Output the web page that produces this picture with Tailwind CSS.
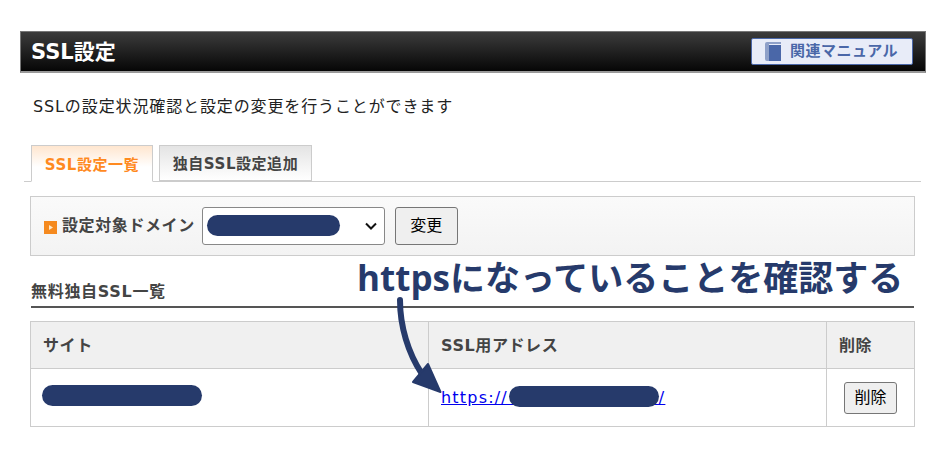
<!DOCTYPE html>
<html lang="ja">
<head>
  <meta charset="UTF-8">
  <title>SSL設定</title>
  <script src="https://cdn.jsdelivr.net/npm/@tailwindcss/browser@4"></script>
</head>
<body class="bg-white w-[950px] h-[450px] overflow-hidden relative font-['DejaVu_Sans','Noto_Sans_CJK_JP',sans-serif] text-[#222]">
  <div class="pt-[31px] pl-[20px] w-[926px]">
    <!-- Title bar -->
    <div class="h-[42px] flex items-center justify-between border border-[#777] border-b-2 border-b-[#999] bg-linear-to-b/srgb from-[#3c3c3c] to-[#060606] pl-[10px] pr-[12px]">
      <h1 class="text-[21px] font-bold text-white mt-[2px]">SSL設定</h1>
      <a class="w-[162px] h-[27px] flex items-center gap-[9px] pl-[13px] rounded-[2px] bg-[#e8ecf8] border border-[#4a67a8] text-[#4a67a8] text-[15px] tracking-[0.5px] font-bold">
        <svg width="16" height="19" viewBox="0 0 16 19"><path d="M2 0h14v2H4v17H2a2 2 0 0 1-2-2V2a2 2 0 0 1 2-2z" fill="#8ea0c8"/><path d="M4 3h12v16H4z" fill="#4a67a8"/></svg>
        関連マニュアル
      </a>
    </div>

    <p class="mt-[23px] ml-[13px] text-[16px] leading-[22px] tracking-[0.88px]">SSLの設定状況確認と設定の変更を行うことができます</p>

    <!-- Tabs -->
    <div class="mt-[27px] ml-[4px] w-[897px] h-[37px] flex gap-[6px] pl-[7px] border-b border-[#ccc] text-[15px] tracking-[0.55px] font-bold">
      <div class="w-[122px] h-[37px] pt-[3px] flex items-center justify-center border border-[#ccc] border-b-white bg-linear-to-b/srgb from-[#ffe6cf] to-white to-60% text-[#ff8a1f]">SSL設定一覧</div>
      <div class="w-[153px] h-[36px] pt-[3px] flex items-center justify-center border border-[#ccc] bg-linear-to-b/srgb from-[#e4e4e4] to-white text-[#444]">独自SSL設定追加</div>
    </div>

    <!-- Domain selector -->
    <div class="mt-[14px] ml-[10px] w-[885px] h-[60px] flex items-center pl-[13px] border border-[#ccc] bg-linear-to-b/srgb from-[#fafafa] to-[#f3f3f3]">
      <svg width="13" height="13" viewBox="0 0 13 13" class="mt-[2px]"><rect width="13" height="13" fill="#f58a1f"/><path d="M5 4l4 2.5L5 9z" fill="#ffe9c8"/></svg>
      <span class="ml-[5px] text-[16px] tracking-[0.6px] font-bold text-[#444] whitespace-nowrap">設定対象ドメイン</span>
      <div class="ml-[7px] w-[183px] h-[38px] flex items-center justify-end pr-[7px] bg-white border border-[#888] rounded-[3px]">
        <svg width="12" height="8" viewBox="0 0 12 8"><path d="M1 1.5l5 5 5-5" fill="none" stroke="#111" stroke-width="2"/></svg>
      </div>
      <button class="ml-[10px] w-[63px] h-[38px] bg-[#efefef] border border-[#767676] rounded-[3px] text-[16px] text-black">変更</button>
    </div>

    <!-- Table heading -->
    <h2 class="mt-[25px] ml-[11px] w-[883px] h-[27px] border-b-2 border-[#555] text-[16px] tracking-[0.7px] font-bold text-[#444] leading-[22px]">無料独自SSL一覧</h2>

    <!-- Table -->
    <table class="mt-[13px] ml-[10px] w-[885px] h-[106px] border-collapse table-fixed text-left text-[16px]">
      <thead>
        <tr class="h-[47px] bg-[#f0f0f0] text-[#444] tracking-[0.6px]">
          <th class="w-[398px] border border-[#ccc] pl-[12px] pt-[2px] font-bold">サイト</th>
          <th class="w-[398px] border border-[#ccc] pl-[12px] pt-[2px] font-bold">SSL用アドレス</th>
          <th class="border border-[#ccc] pl-[12px] pt-[2px] font-bold">削除</th>
        </tr>
      </thead>
      <tbody>
        <tr class="h-[58px]">
          <td class="border border-[#ccc]"></td>
          <td class="border border-[#ccc] pl-[12px]"><a class="text-[#0000ee] underline tracking-[1.2px] whitespace-nowrap">https://&nbsp;&nbsp;&nbsp;&nbsp;&nbsp;&nbsp;&nbsp;&nbsp;&nbsp;&nbsp;&nbsp;&nbsp;&nbsp;&nbsp;&nbsp;&nbsp;&nbsp;&nbsp;&nbsp;&nbsp;&nbsp;&nbsp;&nbsp;&nbsp;/</a></td>
          <td class="border border-[#ccc]"><button class="ml-[17px] w-[53px] h-[32px] bg-[#efefef] border border-[#767676] rounded-[3px] text-[16px] text-black">削除</button></td>
        </tr>
      </tbody>
    </table>
  </div>

  <!-- Redactions and annotation, drawn over the page -->
  <div class="absolute left-[207px] top-[215px] w-[133px] h-[21px] rounded-full bg-[#263a6b]"></div>
  <div class="absolute left-[42px] top-[385px] w-[160px] h-[21px] rounded-full bg-[#263a6b]"></div>
  <div class="absolute left-[509px] top-[386px] w-[150px] h-[21px] rounded-full bg-[#263a6b]"></div>
  <div class="absolute left-[357px] top-[256px] font-['Open_Sans','Noto_Sans_CJK_JP',sans-serif] text-[35px] leading-[44px] font-bold text-[#263a6b] whitespace-nowrap">httpsになっていることを確認する</div>
  <svg class="absolute left-[390px] top-[296px]" width="60" height="100" viewBox="0 0 60 100">
    <path d="M10 4C10 30 18 57 32 78" fill="none" stroke="#263a6b" stroke-width="6" stroke-linecap="round"/>
    <path d="M50.500 96L23 86 38 68z" fill="#263a6b" stroke="#263a6b" stroke-width="2" stroke-linejoin="round"/>
  </svg>
</body>
</html>
